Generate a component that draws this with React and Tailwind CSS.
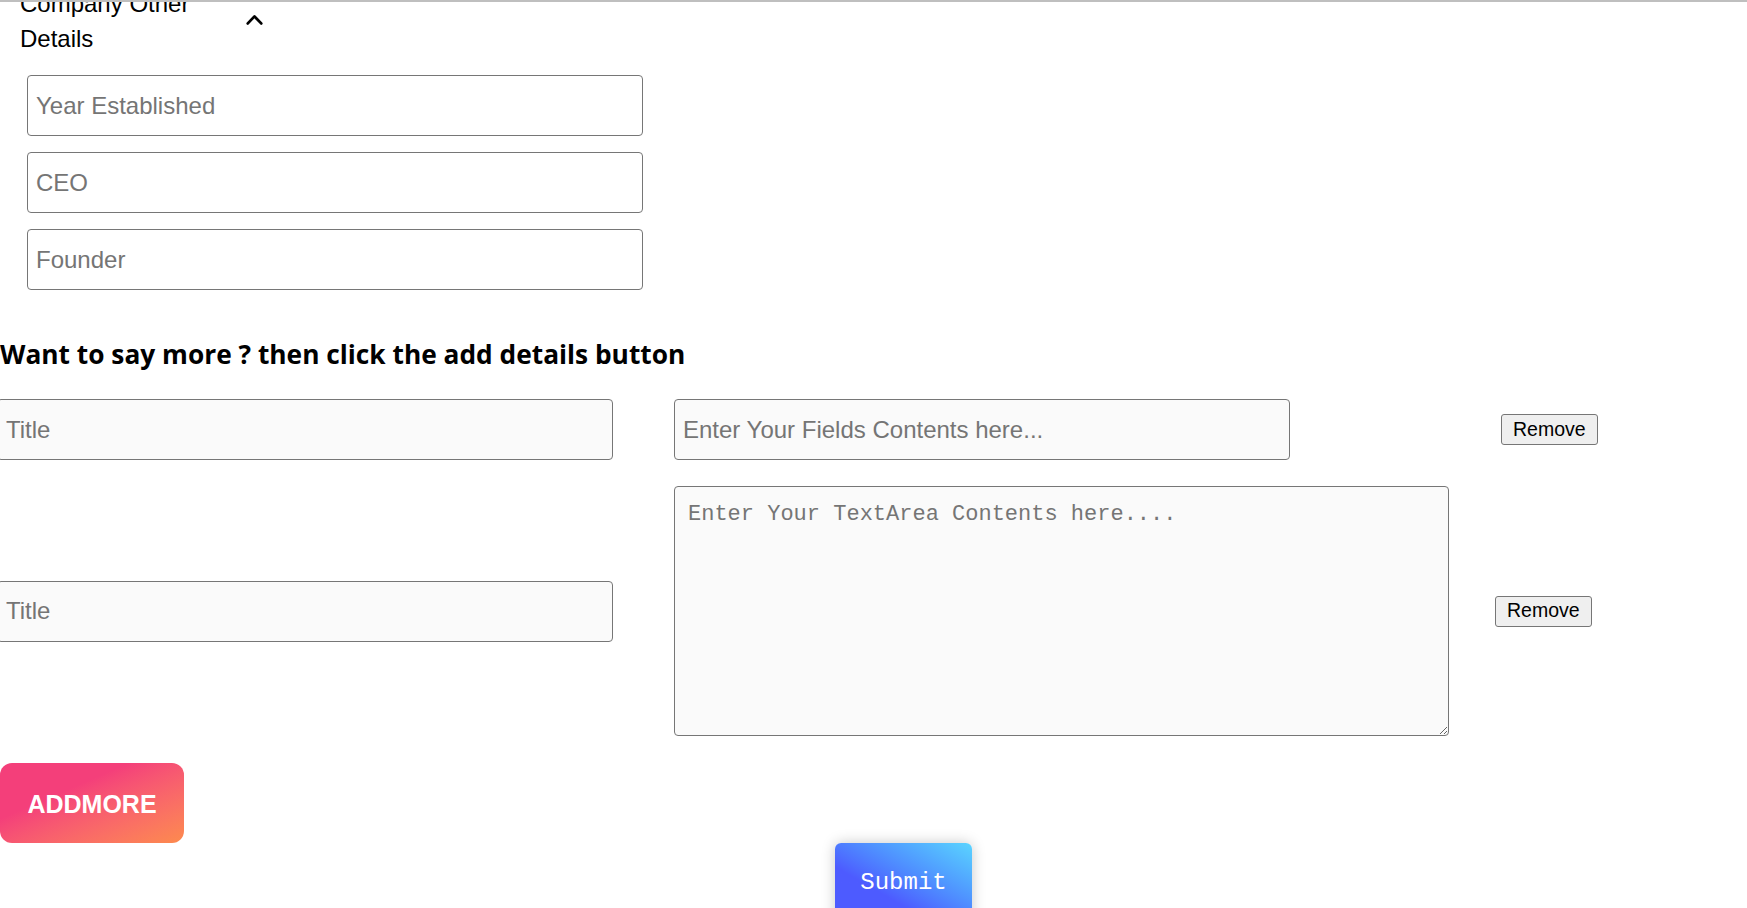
import React from 'react';

// Small chevron used by the collapsible section header
const ChevronUp = () => (
  <svg width="17" height="11" viewBox="0 0 17 11" fill="none">
    <path d="M1.8 9.4 L8.5 2.4 L15.2 9.4" stroke="#000" strokeWidth="2.8" strokeLinecap="round" strokeLinejoin="round" />
  </svg>
);

export default function App() {
  const topInput =
    "block w-[616px] h-[61px] px-[8px] border border-[#767676] rounded-[4px] bg-white text-[24px] text-black placeholder:text-[#757575] outline-none";
  const rowInput =
    "block w-[616px] h-[61px] px-[8px] border border-[#767676] rounded-[4px] bg-[#fafafa] text-[24px] text-black placeholder:text-[#757575] outline-none flex-shrink-0";
  const removeBtn =
    "h-[31px] px-[11px] border border-[#767676] rounded-[3px] bg-[#efefef] text-[19.5px] text-black leading-none flex-shrink-0";

  return (
    <div className="relative w-full h-[908px] overflow-hidden bg-white font-['Liberation_Sans',Arial,sans-serif] text-black">
      {/* header border line */}
      <div className="absolute top-0 left-0 right-0 h-[2px] bg-[#bfbfbf] z-10" />

      {/* Company other details section */}
      <div className="-mt-[14px] flex items-center">
        <div className="ml-[20px] w-[216px] text-[24px] leading-[35px]">Company Other Details</div>
        <div className="ml-[10px] -mt-[4px]">
          <ChevronUp />
        </div>
      </div>

      <div className="mt-[19px] pl-[27px] flex flex-col gap-[16px]">
        <input className={topInput} placeholder="Year Established" />
        <input className={topInput} placeholder="CEO" />
        <input className={topInput} placeholder="Founder" />
      </div>

      <h2 className="mt-[48px] h-[32px] text-[26.3px] leading-[32px] font-bold font-['Open_Sans',sans-serif] whitespace-nowrap">
        Want to say more ? then click the add details button
      </h2>

      {/* Extra fields */}
      <div className="mt-[29px] -ml-[3px] flex items-center">
        <input className={rowInput} placeholder="Title" />
        <input className={`${rowInput} ml-[61px]`} placeholder="Enter Your Fields Contents here..." />
        <button className={`${removeBtn} ml-[211px]`}>Remove</button>
      </div>

      <div className="mt-[26px] -ml-[3px] flex items-center">
        <input className={rowInput} placeholder="Title" />
        <textarea
          className="ml-[61px] w-[775px] h-[250px] pl-[13px] pr-[8px] pt-[15px] border border-[#767676] rounded-[4px] bg-[#fafafa] text-[22px] leading-[26px] font-['Liberation_Mono',monospace] placeholder:text-[#757575] outline-none flex-shrink-0"
          placeholder="Enter Your TextArea Contents here...."
        />
        <button className={`${removeBtn} ml-[46px]`}>Remove</button>
      </div>

      <button className="mt-[27px] block w-[184px] h-[80px] pt-[4px] rounded-[12px] bg-linear-to-br from-[#f43f7a] from-35% to-[#fd8a4d] text-white text-[25px] font-bold">
        ADDMORE
      </button>

      <button className="ml-[835px] block w-[137px] h-[79px] rounded-[6px] bg-linear-to-tr from-[#4d5bff] from-35% to-[#5bd4ff] text-white text-[24px] font-['Liberation_Mono',monospace] shadow-[0_0_14px_rgba(0,0,0,0.22)]">
        Submit
      </button>
    </div>
  );
}
